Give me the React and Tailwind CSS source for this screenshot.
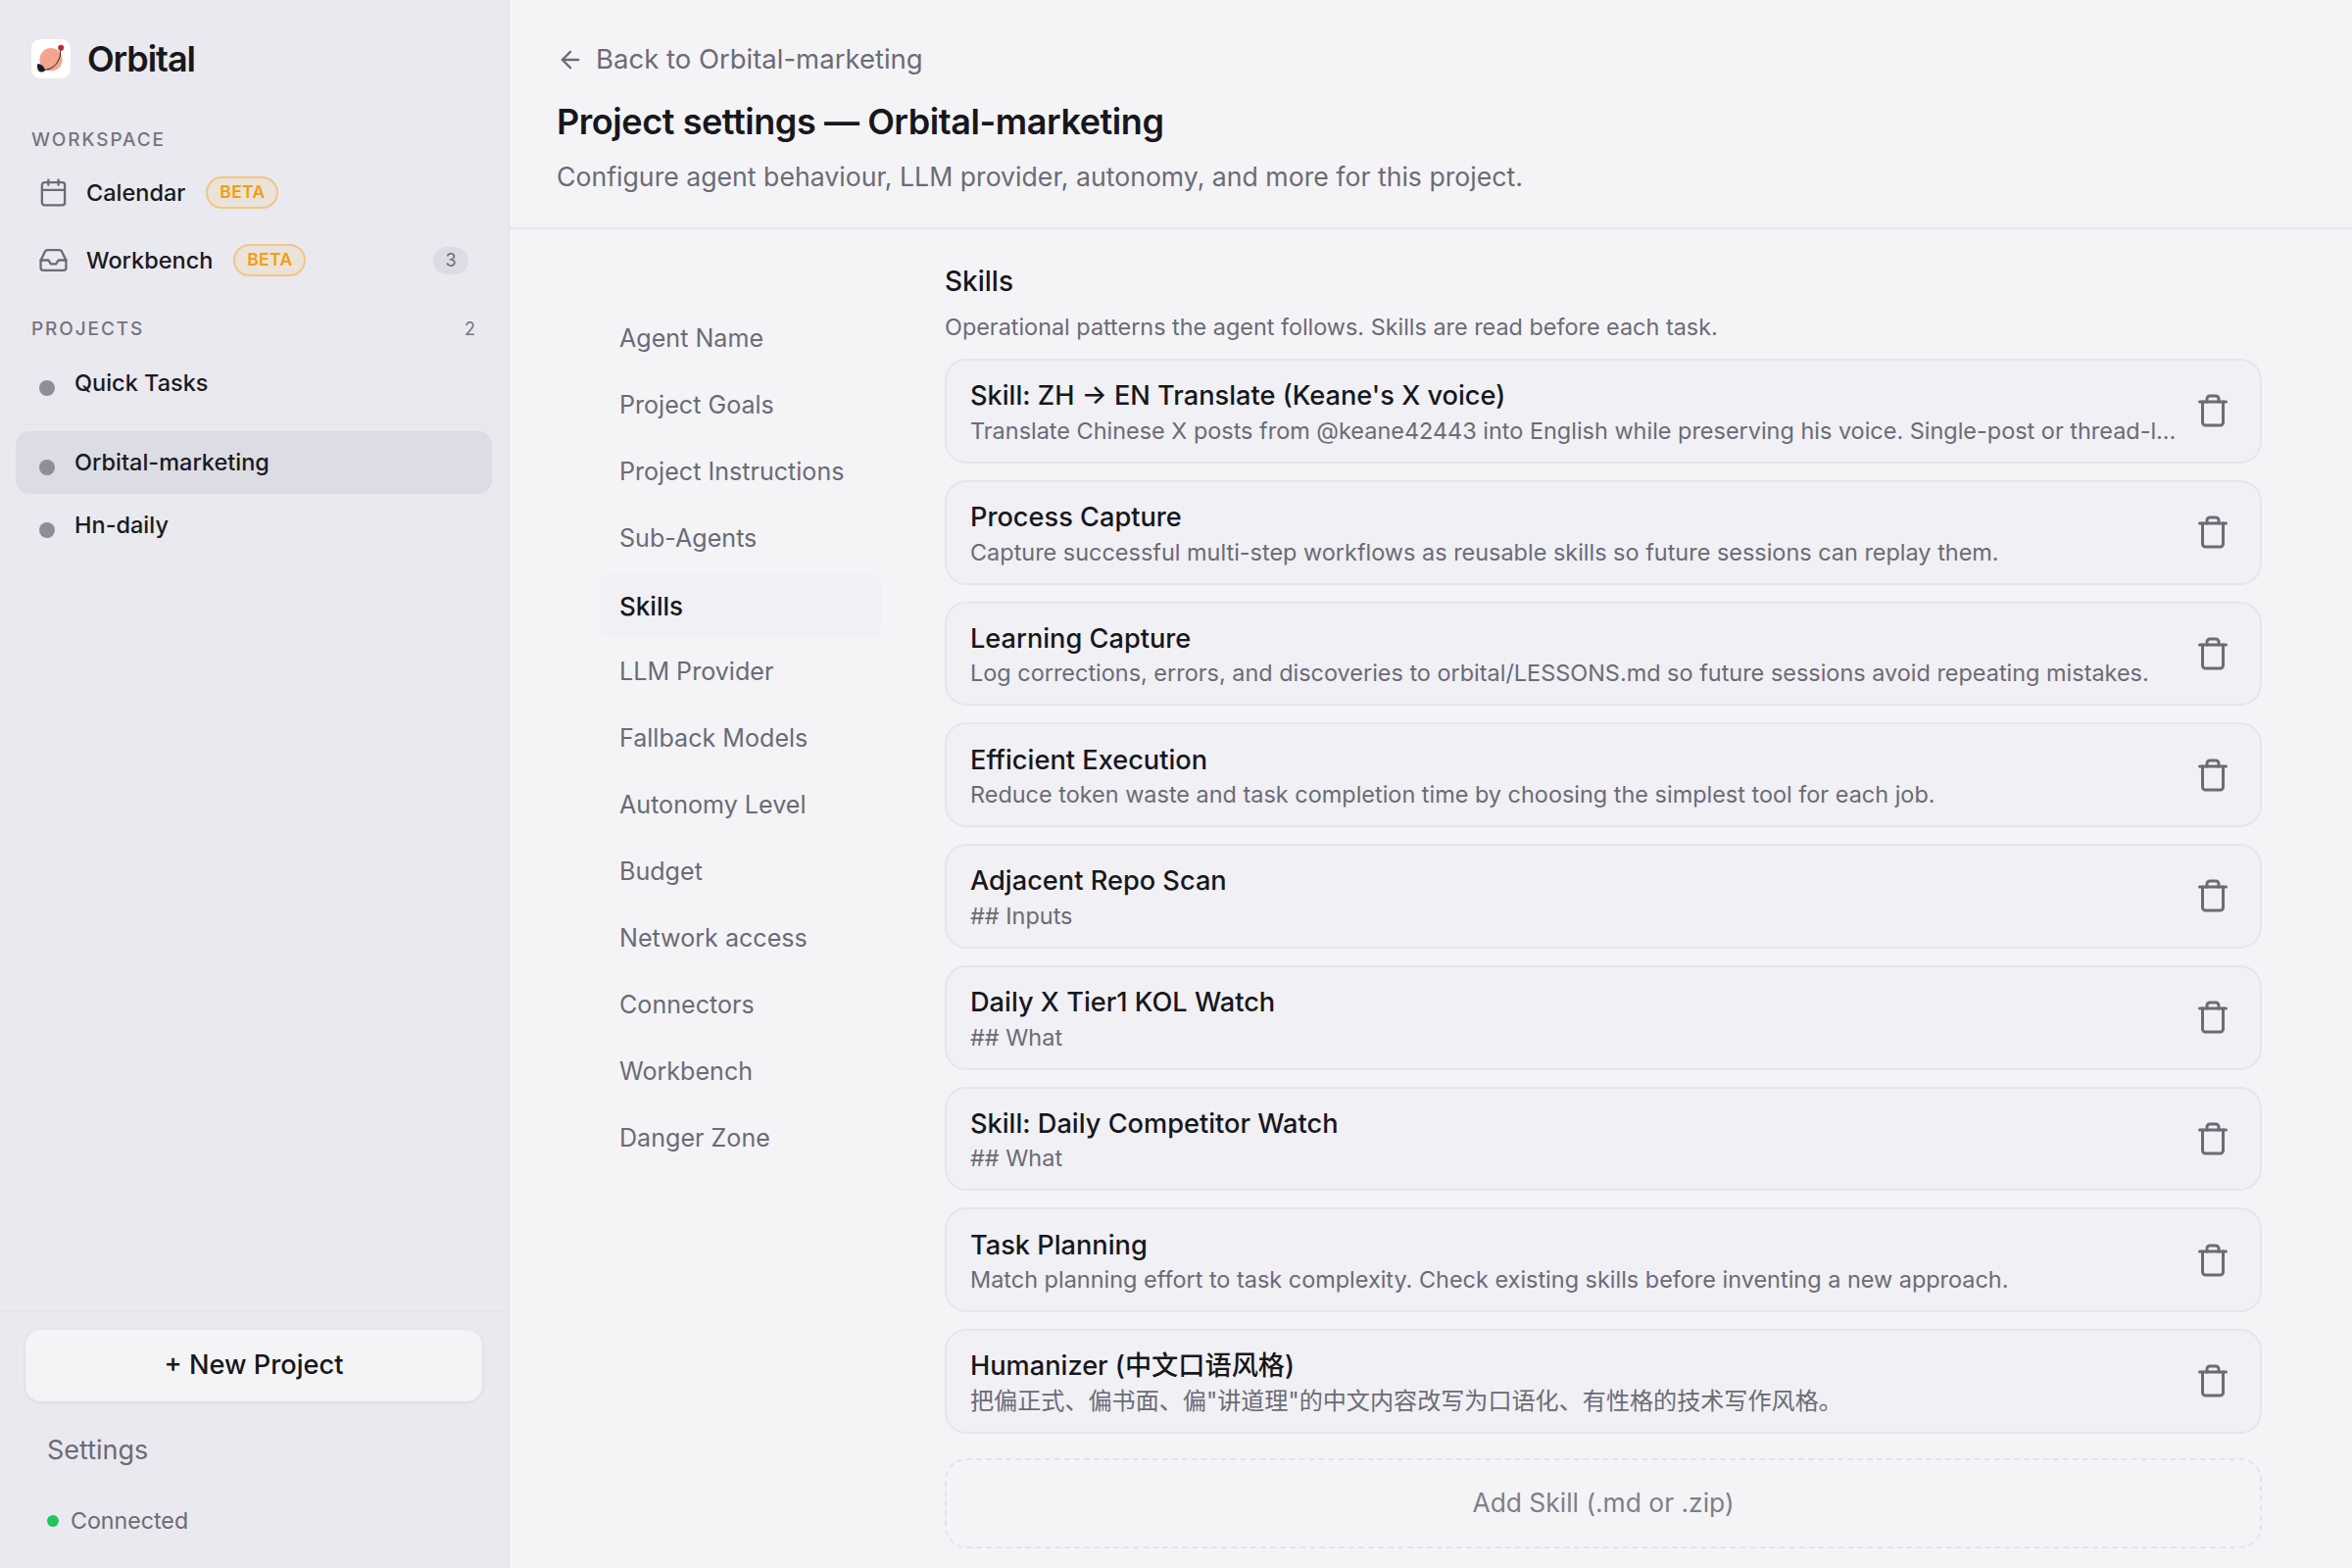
import React from "react";
import { ArrowLeft, Calendar, Inbox, Trash } from "lucide-react";

const SECTIONS = [
  "Agent Name",
  "Project Goals",
  "Project Instructions",
  "Sub-Agents",
  "Skills",
  "LLM Provider",
  "Fallback Models",
  "Autonomy Level",
  "Budget",
  "Network access",
  "Connectors",
  "Workbench",
  "Danger Zone",
];

const SKILLS = [
  {
    name: "Skill: ZH → EN Translate (Keane's X voice)",
    desc: "Translate Chinese X posts from @keane42443 into English while preserving his voice. Single-post or thread-l...",
  },
  {
    name: "Process Capture",
    desc: "Capture successful multi-step workflows as reusable skills so future sessions can replay them.",
  },
  {
    name: "Learning Capture",
    desc: "Log corrections, errors, and discoveries to orbital/LESSONS.md so future sessions avoid repeating mistakes.",
  },
  {
    name: "Efficient Execution",
    desc: "Reduce token waste and task completion time by choosing the simplest tool for each job.",
  },
  { name: "Adjacent Repo Scan", desc: "## Inputs" },
  { name: "Daily X Tier1 KOL Watch", desc: "## What" },
  { name: "Skill: Daily Competitor Watch", desc: "## What" },
  {
    name: "Task Planning",
    desc: "Match planning effort to task complexity. Check existing skills before inventing a new approach.",
  },
  {
    name: "Humanizer (中文口语风格)",
    desc: "把偏正式、偏书面、偏\"讲道理\"的中文内容改写为口语化、有性格的技术写作风格。",
    cjk: true,
  },
];

const Logo = () => (
  <div className="w-10 h-10 rounded-[9px] bg-white shrink-0">
    <svg viewBox="0 0 40 40" className="w-10 h-10">
      <circle cx="20" cy="20.7" r="11.6" fill="#f4a58e" />
      <path d="M29.5 11c1 7-3 14-7 17-3 2.300-6 3-9 3.300" fill="none" stroke="#1c1c28" strokeWidth="1" />
      <path d="M6.500 25c3.500 0 7 3 7.500 7-2.500 2-5 2-6.500 0.500-1.500-2-2-5-1-7.500z" fill="#1c1c28" />
      <circle cx="30.200" cy="8.800" r="3" fill="#c9252d" />
    </svg>
  </div>
);

const BetaPill = () => (
  <span className="h-[33px] w-[74px] flex items-center justify-center rounded-full border-2 border-[#f0c684] bg-[#eae3da] text-[#f59e0b] text-[17.5px] font-semibold tracking-[0.02em]">
    BETA
  </span>
);

const ProjectRow = ({ label, active }) => (
  <div className={`h-16 px-6 flex items-center gap-5 rounded-[14px] ${active ? "bg-[#dcdce5]" : ""}`}>
    <span className="w-4 h-4 rounded-full bg-[#8e8e9a] mt-[10px] shrink-0" />
    <span className="text-[23.5px] font-medium text-[#1a1a1f]">{label}</span>
  </div>
);

const Sidebar = () => (
  <aside className="w-[520px] shrink-0 bg-[#e9e9ef] border-r-2 border-[#e4e4ea] flex flex-col">
    <div className="flex items-center gap-[17px] pl-8 pt-10 h-20">
      <Logo />
      <span className="text-[36px] font-semibold tracking-[-0.03em] text-[#17171c]">Orbital</span>
    </div>

    <div className="pl-[32px] mt-[51px] text-[19px] font-medium tracking-[0.1em] leading-6 text-[#74747f]">WORKSPACE</div>

    <div className="mt-[24.5px] pl-[39px] pr-10 flex items-center h-[34px]">
      <Calendar size={31} strokeWidth={1.8} className="text-[#6b6b76] shrink-0" />
      <span className="ml-[18px] mr-[21px] text-[23.5px] font-medium text-[#1a1a1f]">Calendar</span>
      <BetaPill />
    </div>

    <div className="mt-[35px] pl-[39px] pr-10 flex items-center h-[34px]">
      <Inbox size={31} strokeWidth={1.8} className="text-[#6b6b76] shrink-0" />
      <span className="ml-[18px] mr-[21px] text-[23.5px] font-medium text-[#1a1a1f]">Workbench</span>
      <BetaPill />
      <span className="ml-auto w-9 h-7 rounded-full bg-[#dcdce5] text-[#6b6b76] text-[18px] flex items-center justify-center">3</span>
    </div>

    <div className="mt-[41.5px] pl-[32px] pr-[33px] flex items-center justify-between text-[19px] font-medium leading-6 text-[#74747f]">
      <span className="tracking-[0.1em]">PROJECTS</span>
      <span className="font-normal text-[18px]">2</span>
    </div>

    <div className="px-4 mt-[10.5px]">
      <ProjectRow label="Quick Tasks" />
      <div className="h-[2px] mt-[9px] mb-[6px] bg-[#e6e6ec]" />
      <ProjectRow label="Orbital-marketing" active />
      <ProjectRow label="Hn-daily" />
    </div>

    <div className="mt-auto border-t-2 border-[#e4e4ea] px-[26px] pt-[17.5px] pb-[32.5px]">
      <button className="w-full h-[73px] rounded-2xl bg-[#f4f4f7] shadow-[0_1px_4px_rgba(0,0,0,0.08)] text-[27.2px] font-medium text-[#17171c]">
        + New Project
      </button>
      <div className="mt-[30px] pl-[22px] text-[27px] leading-10 text-[#6b6b76]">Settings</div>
      <div className="mt-[36px] pl-[22px] flex items-center gap-3 text-[23.2px] leading-8 text-[#6b6b76]">
        <span className="w-3 h-3 rounded-full bg-[#22c55e]" />
        Connected
      </div>
    </div>
  </aside>
);

const SkillCard = ({ name, desc, cjk }) => (
  <div className="h-[106.75px] rounded-[22px] border-2 border-[#e5e5ea] bg-[#f0f0f5] pl-[24px] pr-[30px] flex items-center">
    <div className="flex-1 min-w-0 mr-[8px] pt-[4.5px]">
      <div className="text-[27.2px] leading-[36px] font-medium text-[#17171c]">{name}</div>
      <div className={`mt-[0.5px] leading-[34px] text-[#6b6b76] whitespace-nowrap ${cjk ? "text-[24.1px]" : "text-[23.45px]"}`}>{desc}</div>
    </div>
    <Trash size={36} strokeWidth={2} className="text-[#6b6b76] shrink-0" />
  </div>
);

export default function App() {
  return (
    <div className="w-screen h-screen overflow-hidden flex bg-[#f4f4f7] font-['Inter','Noto_Sans_CJK_SC',sans-serif]">
      <Sidebar />
      <main className="flex-1 min-w-0 flex flex-col">
        <header className="h-[234px] shrink-0 border-b-2 border-[#e5e5ea] pl-12 pt-[45px]">
          <div className="flex items-center gap-3 h-8 text-[27.5px] text-[#6b6b76]">
            <ArrowLeft size={28} strokeWidth={2} />
            Back to Orbital-marketing
          </div>
          <h1 className="mt-[27px] text-[36px] leading-10 font-semibold tracking-[-0.012em] text-[#17171c]">
            Project settings — Orbital-marketing
          </h1>
          <p className="mt-[18px] text-[26.67px] leading-9 text-[#6b6b76]">
            Configure agent behaviour, LLM provider, autonomy, and more for this project.
          </p>
        </header>

        <div className="flex-1 min-h-0 flex pl-[92px] pr-[92px]">
          <nav className="w-[288px] shrink-0 pt-[80px] flex flex-col">
            {SECTIONS.map((s) => (
              <div
                key={s}
                className={`h-[64px] mb-[4px] pl-5 flex items-center rounded-xl ${
                  s === "Skills" ? "bg-[#f0f0f5] text-[#17171c] font-medium text-[26px]" : "text-[#6b6b76] text-[25.1px]"
                }`}
              >
                {s}
              </div>
            ))}
          </nav>

          <section className="flex-1 min-w-0 ml-16 pt-[35px]">
            <h2 className="text-[28px] leading-9 font-medium text-[#17171c]">Skills</h2>
            <p className="mt-[11px] text-[23.4px] leading-9 text-[#6b6b76]">
              Operational patterns the agent follows. Skills are read before each task.
            </p>
            <div className="mt-[14px] flex flex-col gap-[17px]">
              {SKILLS.map((s) => (
                <SkillCard key={s.name} {...s} />
              ))}
            </div>
            <button className="mt-[25px] w-full h-[92px] rounded-[22px] border-2 border-dashed border-[#e2e2e8] text-[26.4px] text-[#7f7f8a]">
              Add Skill (.md or .zip)
            </button>
          </section>
        </div>
      </main>
    </div>
  );
}
